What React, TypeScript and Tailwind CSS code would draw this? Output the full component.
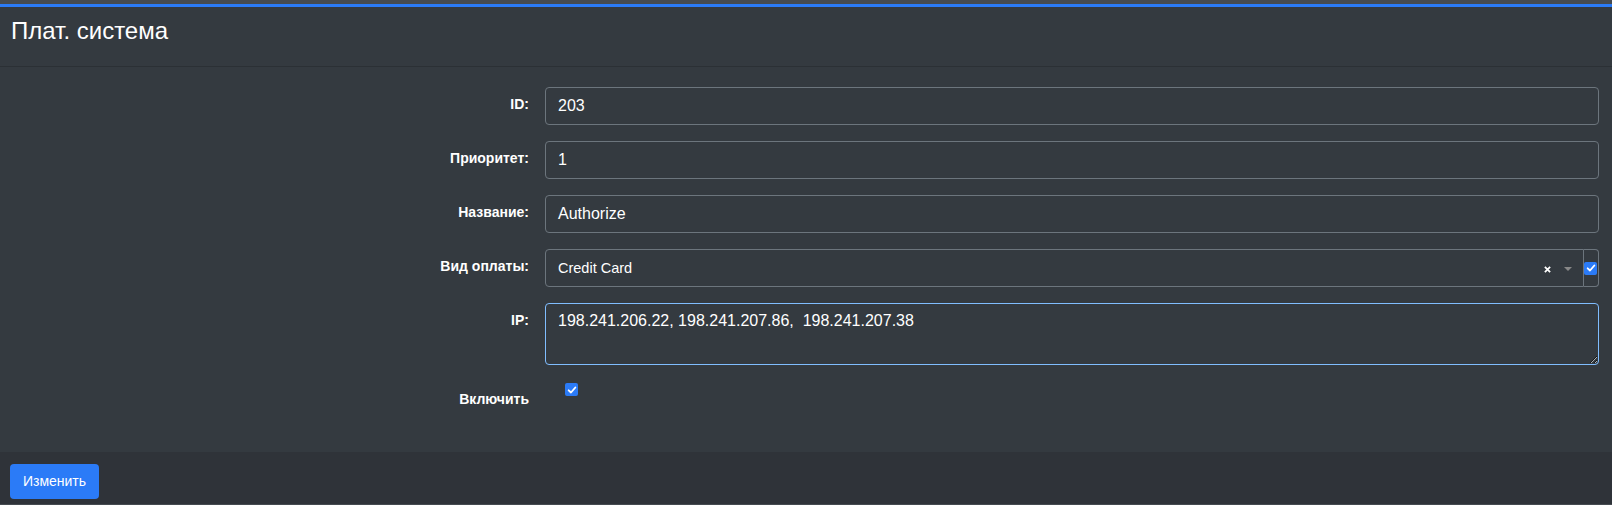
import React from 'react';

const fields = [
    { label: 'ID:', value: '203' },
    { label: 'Приоритет:', value: '1' },
    { label: 'Название:', value: 'Authorize' },
];

const Check = ({ className = '' }: { className?: string }) => (
    <span className={`flex h-[13px] w-[13px] items-center justify-center rounded-[2px] bg-[#2b7bf7] ${className}`}>
        <svg viewBox="0 0 12 12" className="h-[10px] w-[10px]">
            <path d="M2 6.4 L4.8 9 L10 3" fill="none" stroke="white" strokeWidth="2.2" strokeLinecap="round" strokeLinejoin="round" />
        </svg>
    </span>
);

const App: React.FC = () => {
    return (
        <div className="min-h-[505px] bg-[#464b51] pt-[4px] font-['Liberation_Sans',Arial,sans-serif] text-white">
            <div className="border-t-[3px] border-[#2b7bf7] bg-[#343a40]">
                <div className="h-[60px] border-b border-[#2b3035] px-[11px] pt-[10px]">
                    <h1 className="text-[24px] leading-[1.2] font-normal">Плат. система</h1>
                </div>

                <div className="h-[385px] pt-[20px] pr-[13px]">
                    {fields.map(f => (
                        <div key={f.label} className="flex gap-[16px] mb-[16px]">
                            <label className="w-[529px] shrink-0 text-right text-[14px] font-bold leading-[21px] pt-[7px]">{f.label}</label>
                            <div className="flex-1 h-[38px] border border-[#6c757d] rounded-[4px] px-[12px] pt-[6px] text-[16px] leading-[24px]">{f.value}</div>
                        </div>
                    ))}

                    <div className="flex gap-[16px] mb-[16px]">
                        <label className="w-[529px] shrink-0 text-right text-[14px] font-bold leading-[21px] pt-[7px]">Вид оплаты:</label>
                        <div className="flex-1 flex h-[38px]">
                            <div className="flex-1 flex items-center border border-[#6c757d] rounded-l-[4px] pl-[12px] pr-[11px] pt-[2px] text-[14.5px]">
                                <span className="flex-1">Credit Card</span>
                                <svg viewBox="0 0 8 8" className="h-[7px] w-[7px] mr-[13px]">
                                    <path d="M1 1 L7 7 M7 1 L1 7" stroke="white" strokeWidth="2" />
                                </svg>
                                <svg viewBox="0 0 8 4" className="h-[4px] w-[8px]">
                                    <path d="M0 0 L8 0 L4 4 Z" fill="#888" />
                                </svg>
                            </div>
                            <div className="w-[15px] flex items-center border border-l-0 border-[#6c757d] rounded-r-[4px]">
                                <Check className="-mr-[1px]" />
                            </div>
                        </div>
                    </div>

                    <div className="flex gap-[16px] mb-[16px]">
                        <label className="w-[529px] shrink-0 text-right text-[14px] font-bold leading-[21px] pt-[7px]">IP:</label>
                        <textarea
                            readOnly
                            defaultValue="198.241.206.22, 198.241.207.86,  198.241.207.38"
                            className="flex-1 h-[62px] border border-[#80bdff] rounded-[4px] bg-transparent px-[12px] pt-[5px] text-[16px] leading-[24px] text-white outline-none resize-y font-['Liberation_Sans',Arial,sans-serif]"
                        />
                    </div>

                    <div className="flex gap-[16px]">
                        <label className="w-[529px] shrink-0 text-right text-[14px] font-bold leading-[21px] pt-[8px]">Включить</label>
                        <div className="pl-[20px] pt-[2px]">
                            <Check />
                        </div>
                    </div>
                </div>

                <div className="h-[52px] bg-[#2f3339] px-[10px] pt-[12px]">
                    <button className="h-[35px] w-[89px] rounded-[4px] bg-[#2b7bf7] text-[14px] text-white">Изменить</button>
                </div>
            </div>
        </div>
    );
};

export default App;
